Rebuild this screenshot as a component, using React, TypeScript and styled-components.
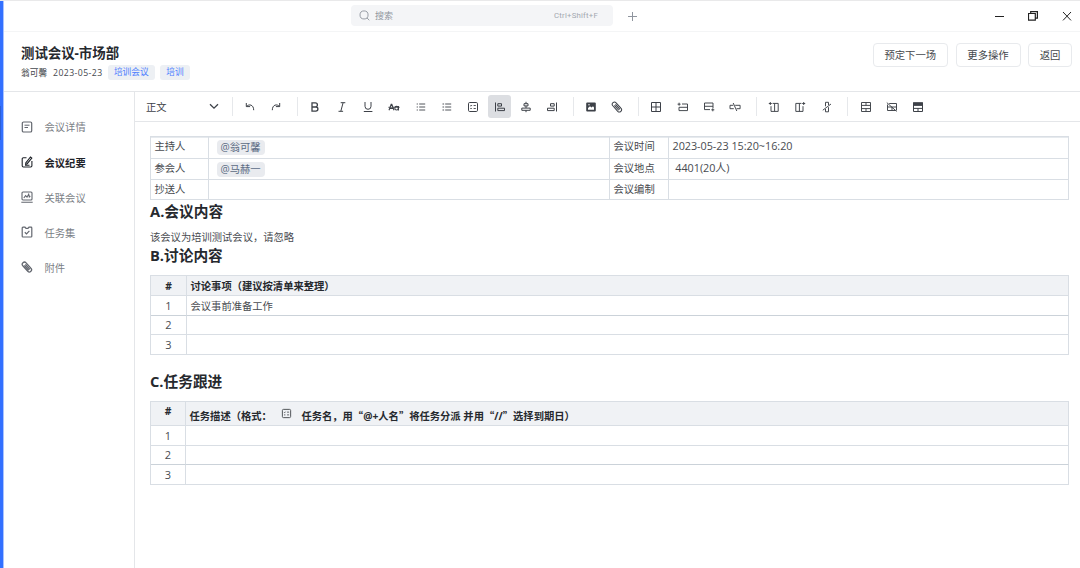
import React from 'react';
import styled, { createGlobalStyle, css } from 'styled-components';

const latin = '"Open Sans", "Noto Sans CJK SC", sans-serif';

const GlobalStyle = createGlobalStyle`
  * { box-sizing: border-box; }
  html, body { margin: 0; padding: 0; background: #fff; overflow: hidden; }
  body { font-family: ${latin}; font-size: 10.3px; color: #484b50; }
`;

const Window = styled.div`
  display: flex;
  width: 1080px;
  height: 568px;
  border-top: 1px solid #e9e9ea;
`;

const Accent = styled.div`
  flex: none;
  width: 4px;
  background: #3370ff;
  border-right: 1px solid #a9c3ff;
  padding-top: 105px;
`;

const AccentMark = styled.div`
  width: 1px;
  height: 34px;
  background: #2c5fd6;
`;

const Main = styled.div`
  flex: 1;
  min-width: 0;
  display: flex;
  flex-direction: column;
`;

const TitleBar = styled.div`
  display: flex;
  align-items: center;
  height: 31px;
  padding: 0 8px 0 347px;
  border-bottom: 1px solid #f4f5f6;
`;

const Search = styled.div`
  display: flex;
  align-items: center;
  width: 262px;
  height: 21px;
  margin-top: -1px;
  padding: 0 15px 0 8px;
  border-radius: 4px;
  background: #f4f5f7;
  color: #8f959e;
  font-size: 9px;
  margin-right: 15px;
`;

const SearchText = styled.span`
  flex: 1;
  margin-left: 5px;
`;

const Shortcut = styled.span`
  font: 7.8px Roboto, sans-serif;
  letter-spacing: 0.22px;
  color: #a3a8b0;
`;

const Controls = styled.div`
  display: flex;
  align-items: center;
  gap: 24px;
  margin-left: auto;
`;

const Header = styled.header`
  display: flex;
  justify-content: space-between;
  height: 60px;
  padding: 11px 8px 0 17px;
  border-bottom: 1px solid #e4e6e9;
`;

const Title = styled.h1`
  margin: 0;
  font: 700 13.4px/20px ${latin};
  color: #26292e;
`;

const Meta = styled.div`
  display: flex;
  align-items: center;
  height: 15px;
  margin-top: 2px;
  font-size: 8.7px;
  color: #45484d;
`;

const MetaDate = styled.span`
  margin: 0 5px 0 6px;
  letter-spacing: 0.42px;
`;

const Tag = styled.span`
  height: 15px;
  padding: 0 6.3px;
  margin-right: 5px;
  border-radius: 3px;
  background: #edf0f4;
  color: #4c7dff;
  line-height: 14px;
`;

const Actions = styled.div`
  display: flex;
  gap: 7.5px;
`;

const Action = styled.button<{ $w: number }>`
  width: ${(p) => p.$w}px;
  height: 24px;
  padding: 0;
  border: 1px solid #e8eaed;
  border-radius: 4px;
  background: #fff;
  color: #45484d;
  font: 10.35px/22px ${latin};
`;

const Body = styled.div`
  flex: 1;
  display: flex;
  min-height: 0;
`;

const Sidebar = styled.nav`
  width: 131px;
  padding: 17.4px 0 0 17px;
  border-right: 1px solid #e4e6e9;
`;

const NavItem = styled.div<{ $active?: boolean }>`
  display: flex;
  align-items: center;
  gap: 11.5px;
  height: 35.1px;
  color: #7a7e85;
  svg { color: #62666e; }
  ${(p) => p.$active && css`
    color: #1f2329;
    font-weight: 700;
    svg { color: #1f2329; }
  `}
`;

const Editor = styled.section`
  flex: 1;
  min-width: 0;
`;

const Toolbar = styled.div`
  display: flex;
  align-items: center;
  height: 30px;
  padding-left: 11px;
  border-bottom: 1px solid #e4e6e9;
  color: #3d4148;
`;

const StyleSelect = styled.div`
  display: flex;
  align-items: center;
  justify-content: space-between;
  width: 73px;
  height: 20px;
  margin-right: 13px;
  padding-bottom: 1px;
`;

const Divider = styled.i`
  flex: none;
  width: 1px;
  height: 19px;
  margin-right: 4px;
  background: #e6e8eb;
`;

const Group = styled.div`
  display: flex;
  margin-right: 7.5px;
`;

const Tool = styled.span<{ $active?: boolean }>`
  display: flex;
  align-items: center;
  justify-content: center;
  width: 23.4px;
  height: 23px;
  margin: 0 1.47px;
  border-radius: 3px;
  background: ${(p) => (p.$active ? '#dcdee2' : 'transparent')};
`;

const Doc = styled.article`
  padding: 14px 0 0 15px;
`;

const Table = styled.div<{ $cols: string; $soft?: boolean }>`
  display: grid;
  grid-template-columns: ${(p) => p.$cols};
  width: 919px;
  border: solid #d9dee4;
  border-width: 1px 0 0 1px;
  box-shadow: ${(p) => (p.$soft ? 'inset 0 1px 0 #e6eaee' : 'none')};
`;

const Cell = styled.div<{ $h: number; $head?: boolean; $center?: boolean; $line?: number; $strong?: boolean }>`
  height: ${(p) => p.$h}px;
  padding: 0 3.5px;
  border: solid #d9dee4;
  border-width: 0 1px 1px 0;
  border-bottom-color: ${(p) => (p.$strong ? '#cbd2d9' : '#d9dee4')};
  line-height: ${(p) => (p.$line ?? p.$h)}px;
  white-space: pre;
  text-align: ${(p) => (p.$center ? 'center' : 'left')};
  ${(p) => p.$center && css`
    font-size: 11px;
    line-height: ${p.$line ?? p.$h - 1}px;
  `}
  ${(p) => p.$head && css`
    background: #f0f2f5;
    color: #26292e;
    font-size: 10.3px;
    font-weight: 700;
  `}
`;

const DateText = styled.span`
  font-size: 10.8px;
  letter-spacing: -0.02px;
`;

const Mention = styled.span`
  display: inline-block;
  height: 15px;
  margin-left: 4px;
  padding: 0 4px;
  border-radius: 4px;
  background: #e9ebef;
  color: #5c6b84;
  line-height: 14px;
`;

const Heading = styled.h2<{ $mt?: number }>`
  height: 24px;
  margin: ${(p) => p.$mt ?? 0}px 0 0;
  font: 700 14.7px/22px ${latin};
  color: #26292e;
`;

const Paragraph = styled.p`
  margin: 6px 0 0;
  height: 15px;
  line-height: 15px;
`;

const TableSpacer = styled.div`
  height: 7px;
`;

const Wide = styled.span`
  font-family: "Noto Sans CJK SC", sans-serif;
`;

const InlineIcon = styled.span`
  display: inline-block;
  margin: 0 9.5px 0 9px;
  color: #45484d;
  svg { display: block; transform: translateY(-1px); }
`;

const Svg = styled.svg`
  flex: none;
  fill: none;
  stroke: currentColor;
  stroke-width: 1;
`;

const Icon = ({ children, size = 12 }: { children: React.ReactNode; size?: number }) => (
  <Svg width={size} height={size} viewBox="0 0 12 12">{children}</Svg>
);

const clip = (
  <g transform="rotate(-42 6 6)">
    <path d="M3.7 8.8V2.3a2.2 2.2 0 0 1 4.4 0v7.2a2.2 2.2 0 0 1-4.4 .2V2.6M5.2 3v6.6M6.6 3v6.8" />
  </g>
);

const checklist = (
  <>
    <rect x="1.5" y="1.5" width="9" height="9" rx="1.2" />
    <path d="M3.3 4.5l.7.7 1-1.2M3.3 7.5h1.5M6.6 4.5h2.2M6.6 7.5h2.2" strokeWidth=".9" />
  </>
);

const history = [
  <path d="M2.3 2v3.6h3.8M2.6 5.3C5 2.8 9.7 3.5 9.7 9.2" />,
  <path d="M9.7 2v3.6H5.9M9.4 5.3C7 2.8 2.3 3.5 2.3 9.2" />,
];

const format = [
  <path d="M3 1.8h3.3a2.1 2.1 0 0 1 0 4.2H3zM3 6h3.8a2.1 2.1 0 0 1 0 4.2H3z" strokeWidth="1.3" />,
  <path d="M4.7 1.7h4.6M2.5 10.3h4.6M7.1 1.7L4.8 10.3" />,
  <path d="M3 1v4.3a3 3 0 0 0 6 0V1M1.8 10.5h8.6" />,
  <>
    <path d="M1 9.3l2.2-6h.6l2.2 6M1.8 7.5h3.4M10.4 5v4.4" strokeWidth="1.1" />
    <circle cx="8.6" cy="7.2" r="1.8" strokeWidth="1.1" />
    <path d="M.3 6.3h11.4" strokeWidth=".8" />
  </>,
  <path d="M1.7 3h1.2M4.2 3h6M1.7 6h1.2M4.2 6h6M1.7 9h1.2M4.2 9h6" strokeWidth=".9" />,
  <path d="M1.5 3h1.6M4.2 3h6M1.5 6h1.6M4.2 6h6M1.5 9h1.6M4.2 9h6" strokeWidth=".9" />,
  checklist,
  <path d="M1.5 1.5v9M3.8 2.7h3.7v2.4H3.8zM3.8 7.2h6.7v2.4H3.8z" />,
  <path d="M6 .8v1.8M4 2.7h4v2.2H4zM6 5v2M1.8 7.1h8.4v2.2H1.8zM6 9.3v1.9" />,
  <path d="M10.5 1.5v9M4.5 2.7h3.7v2.4H4.5zM1.5 7.2h6.7v2.4H1.5z" />,
];

const insert = [
  <>
    <rect x="1.2" y="1.5" width="9.6" height="9" rx="1" fill="currentColor" stroke="none" />
    <path d="M3 8.7V7l2-1.7 1.5 1.3L8 5.3l1 1.2v2.2z" fill="#fff" stroke="none" />
    <circle cx="4" cy="3.7" r=".7" fill="#fff" stroke="none" />
  </>,
  clip,
];

const rowTools = [
  <path d="M1.5 1.5h9v9h-9zM6 1.5v9M1.5 6h9" />,
  <path d="M5 3h5.5v6.6H2V6.3h8.5M.6 3.2h3M2.1 1.7v3" strokeWidth=".95" />,
  <path d="M7 8.6H1.5V2h8.5v5M1.5 5.3H10M8.3 8.8h3M9.8 7.3v3" strokeWidth=".95" />,
  <path d="M4.3 4.3H1v3.4h3.8M6.2 4.3h4.9v3.4H7.6M4.2 2l3.6 8" strokeWidth=".95" />,
];

const columnTools = [
  <path d="M4.6 2.4h5.6v8H3V5.2M6.6 2.4v8M.8 2.5h3M2.3 1v3" strokeWidth=".95" />,
  <path d="M7.4 2.4H1.8v8H9V5.2M5.4 2.4v8M8.2 2.5h3M9.7 1v3" strokeWidth=".95" />,
  <path d="M4.5 5.3V1.3h3V4M4.5 8v2.8h3V6.2M1.8 9.2L10 3" strokeWidth=".95" />,
];

const cellTools = [
  <path d="M1.5 1.5h9v9h-9zM1.5 4.4h9M1.5 7.6h9M6 1.5v2.9M6 7.6v2.9" strokeWidth=".95" />,
  <path d="M3.2 2.5h7.3v7M1.5 3.5v6h8M1.5 6h9M6 6v3.5M.8 1.6l9.8 8.8" strokeWidth=".95" />,
  <>
    <path d="M1.5 2h9v8.5h-9zM1.5 7.4h9M6 7.4v3" />
    <path d="M1 1.3h10v3.6H1z" fill="currentColor" stroke="none" />
  </>,
];

const toolGroups = [history, format, insert, rowTools, columnTools, cellTools];

const nav = [
  { label: '会议详情', icon: <><rect x="1.3" y="1" width="9.4" height="10" rx="1.3" strokeWidth="1.2" /><path d="M3.5 4.2h5M3.5 6.5h3.5" /></> },
  { label: '会议纪要', active: true, icon: <path d="M5.5 1.8H2.4a1.2 1.2 0 0 0-1.2 1.2v6.8A1.2 1.2 0 0 0 2.4 11h7.3a1.2 1.2 0 0 0 1.2-1.2V5M4.8 6.8L9.5 1l1.3 1L6.2 7.7l-1.5.5zM4 9.3h4.5" strokeWidth="1.1" /> },
  { label: '关联会议', icon: <><rect x="1" y="1" width="10" height="8" rx="1" strokeWidth="1.1" /><path d="M2.8 7l1.8-2.3L6 6.2l1.7-3L8.3 6l1-1M.3 11.2h11.4" strokeWidth="1.1" /></> },
  { label: '任务集', icon: <path d="M4 1.2L5 2.4h2l1-1.2h2a.8.8 0 0 1 .8.8v8.2a.8.8 0 0 1-.8.8H2a.8.8 0 0 1-.8-.8V2a.8.8 0 0 1 .8-.8zM3.8 6.3l1.7 1.6 2.9-3" strokeWidth="1.2" /> },
  { label: '附件', icon: <g strokeWidth="1.25">{clip}</g> },
];

const details = [
  ['主持人', '翁可馨', '会议时间', '2023-05-23 15:20~16:20'],
  ['参会人', '马赫一', '会议地点', ' 4401(20人)'],
  ['抄送人', '', '会议编制', ''],
];

export default function App() {
  return (
    <>
      <GlobalStyle />
      <Window>
        <Accent><AccentMark /></Accent>
        <Main>
          <TitleBar>
            <Search>
              <Icon size={11}><circle cx="5.5" cy="5.4" r="4.4" /><path d="M8.8 8.7l2.4 2.5" /></Icon>
              <SearchText>搜索</SearchText>
              <Shortcut>Ctrl+Shift+F</Shortcut>
            </Search>
            <Svg width="9" height="9" viewBox="0 0 9 9" color="#8f959e"><path d="M4.5 0v9M0 4.5h9" /></Svg>
            <Controls>
              <Svg width="9" height="10" viewBox="0 0 9 10"><path d="M0 5.5h9" stroke="#222" /></Svg>
              <Svg width="10" height="10" viewBox="0 0 10 10" color="#222"><path d="M.5 2.5h6.8v6.6H.5zM2.7 2.5V.6h6.7v6.6H7.3" strokeWidth="1.2" /></Svg>
              <Svg width="10" height="10" viewBox="0 0 10 10" color="#222"><path d="M1 1l8 8.4M9 1L1 9.4" /></Svg>
            </Controls>
          </TitleBar>
          <Header>
            <div>
              <Title>测试会议-市场部</Title>
              <Meta>
                <span>翁可馨</span>
                <MetaDate>2023-05-23</MetaDate>
                <Tag>培训会议</Tag>
                <Tag>培训</Tag>
              </Meta>
            </div>
            <Actions>
              <Action $w={75.5}>预定下一场</Action>
              <Action $w={65}>更多操作</Action>
              <Action $w={44}>返回</Action>
            </Actions>
          </Header>
          <Body>
            <Sidebar>
              {nav.map((n) => (
                <NavItem key={n.label} $active={n.active}>
                  <Icon>{n.icon}</Icon>
                  {n.label}
                </NavItem>
              ))}
            </Sidebar>
            <Editor>
              <Toolbar>
                <StyleSelect>
                  正文
                  <Svg width="10" height="7" viewBox="0 0 10 7"><path d="M1 1.2l4 4 4-4" strokeWidth="1.3" /></Svg>
                </StyleSelect>
                {toolGroups.map((group, g) => (
                  <React.Fragment key={g}>
                    <Divider />
                    <Group>
                      {group.map((icon, i) => (
                        <Tool key={i} $active={g === 1 && i === 7}><Icon>{icon}</Icon></Tool>
                      ))}
                    </Group>
                  </React.Fragment>
                ))}
              </Toolbar>
              <Doc>
                <Table $cols="58px 401px 59px 400px" $soft>
                  {details.map(([a, who, b, value], i) => {
                    const h = [22, 21, 20][i];
                    return (
                      <React.Fragment key={a}>
                        <Cell $h={h} $line={19}>{a}</Cell>
                        <Cell $h={h} $line={20}>{who && <Mention>@{who}</Mention>}</Cell>
                        <Cell $h={h} $line={19}>{b}</Cell>
                        <Cell $h={h} $line={18}><DateText>{value}</DateText></Cell>
                      </React.Fragment>
                    );
                  })}
                </Table>
                <Heading>A.会议内容</Heading>
                <Paragraph>该会议为培训测试会议，请忽略</Paragraph>
                <Heading $mt={-1}>B.讨论内容</Heading>
                <TableSpacer />
                <Table $cols="36px 882px">
                  <Cell $h={20} $line={20} $head $center>#</Cell>
                  <Cell $h={20} $head>讨论事项（建议按清单来整理）</Cell>
                  {['会议事前准备工作', '', ''].map((t, i) => (
                    <React.Fragment key={i}>
                      <Cell $h={i === 1 ? 19 : 20} $strong={i === 0} $center>{i + 1}</Cell>
                      <Cell $h={i === 1 ? 19 : 20} $strong={i === 0}>{t}</Cell>
                    </React.Fragment>
                  ))}
                </Table>
                <Heading $mt={15}>C.任务跟进</Heading>
                <TableSpacer />
                <Table $cols="35px 883px">
                  <Cell $h={24} $line={19} $head $center>#</Cell>
                  <Cell $h={24} $line={28} $head>
                    任务描述（格式：<InlineIcon><Icon size={11}>{checklist}</Icon></InlineIcon>任务名，用<Wide>“</Wide>@+人名<Wide>”</Wide>将任务分派 并用<Wide>“</Wide>//<Wide>”</Wide>选择到期日）
                  </Cell>
                  {[20, 19, 20].map((h, i) => (
                    <React.Fragment key={i}>
                      <Cell $h={h} $strong={i === 1} $center>{i + 1}</Cell>
                      <Cell $h={h} $strong={i === 1} />
                    </React.Fragment>
                  ))}
                </Table>
              </Doc>
            </Editor>
          </Body>
        </Main>
      </Window>
    </>
  );
}
